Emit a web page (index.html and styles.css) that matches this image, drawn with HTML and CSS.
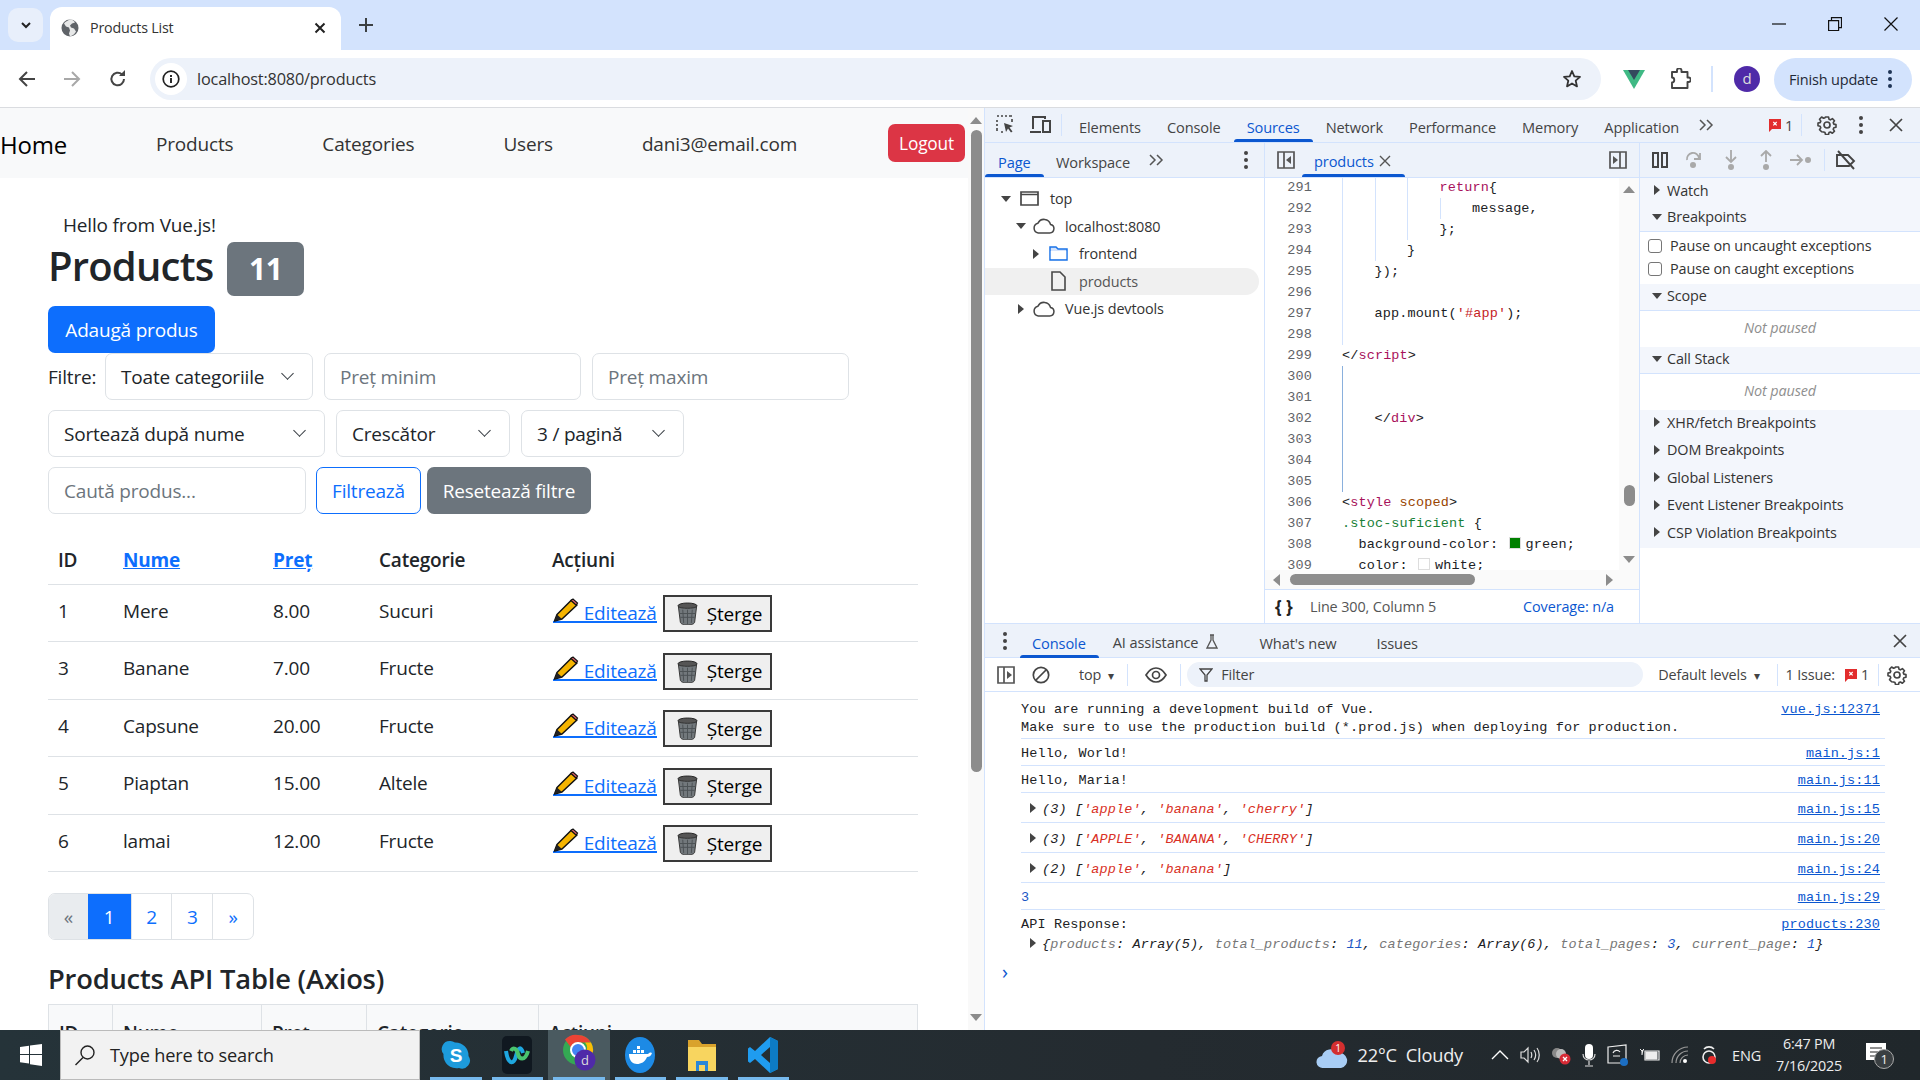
FILE: index.html
```html
<!DOCTYPE html>
<html lang="ro">
<head>
    <meta charset="UTF-8">
    <title>Products List</title>
    <link rel="stylesheet" href="styles.css">
</head>
<body>
<svg class="sprite" width="0" height="0">
    <symbol id="pencil" viewBox="0 0 26 24">
        <path d="M1.500 23l2.500-6.500L18.500 2l5.500 5L9 21z" fill="#f5b400" stroke="#111" stroke-width="1.500" stroke-linejoin="round"/>
        <path d="M18 2.500L20 1l4.500 4-1.500 2z" fill="#e0606a" stroke="#111" stroke-width="1.200"/>
        <path d="M1.500 23L4 16.500 9 21z" fill="#222"/>
    </symbol>
    <symbol id="trash" viewBox="0 0 22 24">
        <ellipse cx="11" cy="4" rx="10" ry="3" fill="#555" stroke="#222"/>
        <path d="M1.500 5l2 16c.3 2 3.500 3 7.500 3s7.200-1 7.500-3l2-16c-2 2-17 2-19 0z" fill="#72787c" stroke="#333"/>
        <path d="M6 8l1 14M11 8v15M16 8l-1 14M3 12h16M3.500 16h15" stroke="#4c5154" fill="none"/>
    </symbol>
    <symbol id="flag" viewBox="0 0 14 14">
        <path d="M1 1h12v10H4l-3 3z" fill="#e22d2d"/>
        <path d="M5.300 4l3.400 3.400M8.700 4L5.300 7.400" stroke="#fff" stroke-width="1.200"/>
    </symbol>
    <symbol id="cloud" viewBox=".5 1 23 16.500">
        <path d="M6 16.500h12a4.500 4.500 0 0 0 .8-8.900A7 7 0 0 0 5.700 6.300 5.200 5.200 0 0 0 6 16.500z" fill="none" stroke="#474747" stroke-width="1.600"/>
    </symbol>
    <symbol id="gear" viewBox="0 0 20 20">
        <path d="M8.300 1.500h3.400l.5 2.500 1.600.7 2.200-1.400 2.300 2.400-1.400 2.100.7 1.700 2.400.5v3l-2.400.5-.7 1.700 1.400 2.100-2.300 2.300-2.200-1.400-1.600.7-.5 2.100H8.300l-.5-2.100-1.600-.7L4 17.900l-2.300-2.300L3.100 13.500l-.7-1.700L0 11.300v-3l2.400-.5.7-1.700L1.700 4l2.300-2.400 2.200 1.400 1.600-.7z" transform="translate(1 .6) scale(.9)" fill="none" stroke="#444" stroke-width="1.800" stroke-linejoin="round"/>
        <circle cx="10" cy="10" r="3" fill="none" stroke="#444" stroke-width="1.700"/>
    </symbol>
    <symbol id="chevrons" viewBox="0 0 15 12">
        <path d="M1 1l5 5-5 5M8 1l5 5-5 5" fill="none" stroke="#555" stroke-width="1.500"/>
    </symbol>
</svg>

<div class="tabstrip">
    <div class="tab-search"><svg width="14" height="14" viewBox="0 0 14 14"><path d="M3 5l4 4 4-4" fill="none" stroke="#222" stroke-width="2"/></svg></div>
    <div class="tab">
        <svg width="18" height="18" viewBox="0 0 18 18"><circle cx="9" cy="9" r="8.500" fill="#5f6368"/><path d="M9 .5c-2 1-5 2-6 4l2 3 3 1 1 3-1 3 1 3c3-1 5-3 6-5l-2-3-3-1-1-2 2-2 3-1c-1-2-3-3-5-3z" fill="#fff" opacity=".85"/></svg>
        <span class="tab-title">Products List</span>
        <svg class="tab-x" width="14" height="14" viewBox="0 0 14 14"><path d="M2.500 2.500l9 9M11.500 2.500l-9 9" stroke="#222" stroke-width="2"/></svg>
    </div>
    <svg class="tab-new" width="16" height="16" viewBox="0 0 16 16"><path d="M8 1v14M1 8h14" stroke="#3c4043" stroke-width="2"/></svg>
    <div class="win-btns">
        <svg width="14" height="14" viewBox="0 0 14 14"><path d="M0 7h14" stroke="#111" stroke-width="1.200"/></svg>
        <svg width="14" height="14" viewBox="0 0 14 14"><path d="M.6 3.600h10v10H.6zM3.500 3.500V.6h10v10h-3" fill="none" stroke="#111" stroke-width="1.200"/></svg>
        <svg width="14" height="14" viewBox="0 0 14 14"><path d="M.5.500l13 13M13.500.5l-13 13" stroke="#111" stroke-width="1.200"/></svg>
    </div>
</div>

<div class="toolbar">
    <svg class="tb-back" width="18" height="18" viewBox="0 0 18 18"><path d="M17 9H2M9 2L2 9l7 7" fill="none" stroke="#444" stroke-width="2"/></svg>
    <svg class="tb-fwd" width="18" height="18" viewBox="0 0 18 18"><path d="M1 9h15M9 2l7 7-7 7" fill="none" stroke="#a8a8a8" stroke-width="2"/></svg>
    <svg class="tb-reload" width="18" height="18" viewBox="0 0 18 18"><path d="M15 9a6.300 6.300 0 1 1-2-4.600" fill="none" stroke="#444" stroke-width="2"/><path d="M10 6h6V0z" fill="#444"/></svg>
    <div class="omnibox">
        <div class="site-info"><svg width="18" height="18" viewBox="0 0 18 18"><circle cx="9" cy="9" r="7.800" fill="none" stroke="#222" stroke-width="1.700"/><path d="M9 8v5M9 5v2" stroke="#222" stroke-width="1.900"/></svg></div>
        <span class="url">localhost:8080/products</span>
        <svg class="star" width="20" height="20" viewBox="0 0 20 20"><path d="M10 2l2.300 5.400 5.700.5-4.300 3.800 1.300 5.700L10 14.400l-5 3 1.300-5.700L2 7.900l5.700-.5z" fill="none" stroke="#333" stroke-width="1.800" stroke-linejoin="round"/></svg>
    </div>
    <svg class="tb-vue" width="22" height="20" viewBox="0 0 22 20"><path d="M0 1h22L11 20z" fill="#3fb984"/><path d="M5 1h12l-6 10z" fill="#34495e"/></svg>
    <svg class="tb-ext" width="22" height="22" viewBox="0 0 22 22"><path d="M3 4h5V2.500a2.200 2.200 0 0 1 4.500 0V4h6v5.500h1a2.200 2.200 0 0 1 0 4.500h-1v6H3v-5.500c3 0 3-5 0-5z" fill="none" stroke="#444" stroke-width="1.900" stroke-linejoin="round"/></svg>
    <span class="tb-sep"></span>
    <span class="avatar">d</span>
    <div class="finish">Finish update<span class="kebab dark"><i></i><i></i><i></i></span></div>
</div>

<div class="main">
    <div class="page">
        <nav class="navbar">
            <a class="brand">Home</a>
            <a>Products</a>
            <a>Categories</a>
            <a>Users</a>
            <a>dani3@email.com</a>
            <button class="btn btn-danger logout">Logout</button>
        </nav>
        <div class="content">
            <p class="hello">Hello from Vue.js!</p>
            <div class="title-row"><h1>Products</h1><span class="badge">11</span></div>
            <button class="btn btn-primary">Adaugă produs</button>
            <div class="filter-row first">
                <label class="lbl-filtre">Filtre:</label>
                <div class="field sel w-cat">Toate categoriile</div>
                <div class="field ph w-pmin">Preț minim</div>
                <div class="field ph w-pmax">Preț maxim</div>
            </div>
            <div class="filter-row">
                <div class="field sel w-sort">Sortează după nume</div>
                <div class="field sel w-ord">Crescător</div>
                <div class="field sel w-per">3 / pagină</div>
            </div>
            <div class="filter-row">
                <div class="field ph w-search">Caută produs...</div>
                <button class="btn btn-outline">Filtrează</button>
                <button class="btn btn-secondary">Resetează filtre</button>
            </div>
            <table class="tbl">
                <colgroup><col class="c1"><col class="c2"><col class="c3"><col class="c4"><col></colgroup>
                <tr><th>ID</th><th><a>Nume</a></th><th><a>Preț</a></th><th>Categorie</th><th>Acțiuni</th></tr>
                <tr><td>1</td><td>Mere</td><td>8.00</td><td>Sucuri</td><td class="actions"><a class="edit"><svg width="26" height="24"><use href="#pencil"/></svg> Editează</a><button class="del"><svg width="21" height="23"><use href="#trash"/></svg> Șterge</button></td></tr>
                <tr><td>3</td><td>Banane</td><td>7.00</td><td>Fructe</td><td class="actions"><a class="edit"><svg width="26" height="24"><use href="#pencil"/></svg> Editează</a><button class="del"><svg width="21" height="23"><use href="#trash"/></svg> Șterge</button></td></tr>
                <tr><td>4</td><td>Capsune</td><td>20.00</td><td>Fructe</td><td class="actions"><a class="edit"><svg width="26" height="24"><use href="#pencil"/></svg> Editează</a><button class="del"><svg width="21" height="23"><use href="#trash"/></svg> Șterge</button></td></tr>
                <tr><td>5</td><td>Piaptan</td><td>15.00</td><td>Altele</td><td class="actions"><a class="edit"><svg width="26" height="24"><use href="#pencil"/></svg> Editează</a><button class="del"><svg width="21" height="23"><use href="#trash"/></svg> Șterge</button></td></tr>
                <tr><td>6</td><td>lamai</td><td>12.00</td><td>Fructe</td><td class="actions"><a class="edit"><svg width="26" height="24"><use href="#pencil"/></svg> Editează</a><button class="del"><svg width="21" height="23"><use href="#trash"/></svg> Șterge</button></td></tr>
            </table>
            <div class="pagination">
                <span class="pg pg-prev">«</span><span class="pg pg-on">1</span><span class="pg">2</span><span class="pg">3</span><span class="pg pg-next">»</span>
            </div>
            <h3>Products API Table (Axios)</h3>
            <table class="tbl2">
                <tr><th class="a">ID</th><th class="b">Nume</th><th class="c">Preț</th><th class="d">Categorie</th><th>Acțiuni</th></tr>
            </table>
        </div>
    </div>
    <div class="page-scroll">
        <span class="arrow up"></span>
        <span class="thumb"></span>
        <span class="arrow down"></span>
    </div>

    <div class="devtools">
        <div class="dt-tabs">
            <svg class="dt-inspect" width="20" height="20" viewBox="0 0 20 20"><path d="M1 1h2M5 1h2M9 1h2M13 1h3M1 5v2M1 9v2M1 13v3M5 17h2M16 4v3" stroke="#444" stroke-width="1.600" fill="none"/><path d="M8 8l9 3-3.500 1.500 3 4-1.500 1-3-4L10 17z" fill="#444"/></svg>
            <svg class="dt-device" width="21" height="20" viewBox="0 0 21 20"><path d="M3 14V2h12v2M0 17h11" fill="none" stroke="#444" stroke-width="2"/><path d="M13 6h7v11h-7z" fill="none" stroke="#444" stroke-width="2"/></svg>
            <span class="dt-sep"></span>
            <span class="dt-tab t-elements">Elements</span>
            <span class="dt-tab">Console</span>
            <span class="dt-tab on">Sources</span>
            <span class="dt-tab">Network</span>
            <span class="dt-tab">Performance</span>
            <span class="dt-tab">Memory</span>
            <span class="dt-tab">Application</span>
            <svg class="more" width="15" height="12"><use href="#chevrons"/></svg>
            <svg class="dt-flag" width="14" height="14"><use href="#flag"/></svg><span class="dt-count">1</span>
            <span class="dt-sep s2"></span>
            <svg class="dt-gear" width="20" height="20"><use href="#gear"/></svg>
            <span class="kebab"><i></i><i></i><i></i></span>
            <svg class="dt-close" width="14" height="14" viewBox="0 0 14 14"><path d="M1 1l12 12M13 1L1 13" stroke="#444" stroke-width="1.700"/></svg>
        </div>
        <div class="dt-top">
            <div class="tree-pane">
                <div class="subbar">
                    <span class="sub-tab on t-page">Page</span>
                    <span class="sub-tab t-work">Workspace</span>
                    <svg class="more small" width="15" height="12"><use href="#chevrons"/></svg>
                    <span class="kebab k-tree"><i></i><i></i><i></i></span>
                </div>
                <div class="tree">
                    <div class="node n0"><span class="tri d"></span><svg width="19" height="15" viewBox="0 0 19 15"><path d="M1 1h17v13H1zM1 3.500h17" fill="none" stroke="#474747" stroke-width="1.700"/></svg>top</div>
                    <div class="node n1"><span class="tri d"></span><svg width="22" height="16"><use href="#cloud"/></svg>localhost:8080</div>
                    <div class="node n2"><span class="tri r"></span><svg width="19" height="15" viewBox="0 0 19 15"><path d="M1 14V1h6l2 2h9v11z" fill="#d3e3fd" stroke="#1a73e8" stroke-width="1.500"/><path d="M1.800 5h15.400v8H1.800z" fill="#fff"/></svg>frontend</div>
                    <div class="node n2 sel-row"><span class="tri none"></span><svg width="15" height="20" viewBox="0 0 15 20"><path d="M1 1h8l5 5v13H1z" fill="none" stroke="#474747" stroke-width="1.600"/></svg>products</div>
                    <div class="node n1"><span class="tri r"></span><svg width="22" height="16"><use href="#cloud"/></svg>Vue.js devtools</div>
                </div>
            </div>
            <div class="code-pane">
                <div class="subbar">
                    <svg class="ico-toggle" width="18" height="18" viewBox="0 0 18 18"><path d="M1 1h16v16H1zM7 1v16" fill="none" stroke="#555" stroke-width="1.700"/><path d="M14 5v8l-5-4z" fill="#555"/></svg>
                    <span class="sub-tab on t-file">products<svg width="12" height="12" viewBox="0 0 12 12"><path d="M1 1l10 10M11 1L1 11" stroke="#555" stroke-width="1.400"/></svg></span>
                    <svg class="ico-toggle r" width="18" height="18" viewBox="0 0 18 18"><path d="M1 1h16v16H1zM11 1v16" fill="none" stroke="#555" stroke-width="1.700"/><path d="M4 5v8l5-4z" fill="#555"/></svg>
                </div>
                <div class="code-view">
                    <div class="code">
<div class="ln"><b>291</b><i></i><i></i><i></i><span class="kw">return</span>{</div>
<div class="ln"><b>292</b><i></i><i></i><i></i><i></i>message,</div>
<div class="ln"><b>293</b><i></i><i></i><i></i>};</div>
<div class="ln"><b>294</b><i></i><i></i>}</div>
<div class="ln"><b>295</b><i></i>});</div>
<div class="ln"><b>296</b><i></i></div>
<div class="ln"><b>297</b><i></i>app.mount(<span class="str">'#app'</span>);</div>
<div class="ln"><b>298</b><i></i></div>
<div class="ln"><b>299</b>&lt;/<span class="kw">script</span>&gt;</div>
<div class="ln"><b>300</b><i class="act"></i></div>
<div class="ln"><b>301</b><i class="act"></i></div>
<div class="ln"><b>302</b><i class="act"></i>&lt;/<span class="kw">div</span>&gt;</div>
<div class="ln"><b>303</b><i class="act"></i></div>
<div class="ln"><b>304</b><i class="act"></i></div>
<div class="ln"><b>305</b><i class="act"></i></div>
<div class="ln"><b>306</b>&lt;<span class="kw">style</span> <span class="attr">scoped</span>&gt;</div>
<div class="ln"><b>307</b><span class="cls">.stoc-suficient</span> {</div>
<div class="ln"><b>308</b>  background-color: <span class="swatch green"></span>green;</div>
<div class="ln"><b>309</b>  color: <span class="swatch white"></span>white;</div>
                    </div>
                    <div class="code-vscroll"><span class="arrow up"></span><span class="vthumb"></span><span class="arrow down"></span></div>
                </div>
                <div class="code-hscroll"><span class="arrow left"></span><span class="hthumb"></span><span class="arrow right"></span></div>
                <div class="status"><span class="braces">{ }</span><span>Line 300, Column 5</span><a>Coverage: n/a</a></div>
            </div>
            <div class="side-pane">
                <div class="subbar dbg">
                    <svg class="d-pause" width="16" height="16" viewBox="0 0 16 16"><path d="M1 1h5v14H1zM10 1h5v14h-5z" fill="none" stroke="#444" stroke-width="2"/></svg>
                    <svg class="d-ico" width="17" height="20" viewBox="0 0 17 20"><path d="M2 10a6 6 0 0 1 12-2M15 3v6h-6" fill="none" stroke="#a9a9a9" stroke-width="1.800"/><circle cx="8" cy="15" r="3" fill="#a9a9a9"/></svg>
                    <svg class="d-ico" width="12" height="20" viewBox="0 0 12 20"><path d="M6 0v11M1 7l5 5 5-5" fill="none" stroke="#a9a9a9" stroke-width="1.800"/><circle cx="6" cy="17" r="3" fill="#a9a9a9"/></svg>
                    <svg class="d-ico" width="12" height="20" viewBox="0 0 12 20"><path d="M6 12V1M1 6l5-5 5 5" fill="none" stroke="#a9a9a9" stroke-width="1.800"/><circle cx="6" cy="17" r="3" fill="#a9a9a9"/></svg>
                    <svg class="d-ico" width="21" height="12" viewBox="0 0 21 12"><path d="M0 6h11M7 1l5 5-5 5" fill="none" stroke="#a9a9a9" stroke-width="1.800"/><circle cx="18" cy="6" r="3" fill="#a9a9a9"/></svg>
                    <span class="dt-sep s3"></span>
                    <svg class="d-off" width="20" height="20" viewBox="0 0 20 20"><path d="M1 5h11l6 6-5 5H1zM2 1l16 18" fill="none" stroke="#444" stroke-width="1.900"/></svg>
                </div>
                <div class="sec b"><span class="tri r"></span>Watch</div>
                <div class="sec b line"><span class="tri d"></span>Breakpoints</div>
                <div class="checks">
                    <label><span class="box"></span>Pause on uncaught exceptions</label>
                    <label><span class="box"></span>Pause on caught exceptions</label>
                </div>
                <div class="sec b line"><span class="tri d"></span>Scope</div>
                <div class="paused">Not paused</div>
                <div class="sec b line"><span class="tri d"></span>Call Stack</div>
                <div class="paused">Not paused</div>
                <div class="sec"><span class="tri r"></span>XHR/fetch Breakpoints</div>
                <div class="sec"><span class="tri r"></span>DOM Breakpoints</div>
                <div class="sec"><span class="tri r"></span>Global Listeners</div>
                <div class="sec"><span class="tri r"></span>Event Listener Breakpoints</div>
                <div class="sec"><span class="tri r"></span>CSP Violation Breakpoints</div>
            </div>
        </div>
        <div class="drawer-tabs">
            <span class="kebab k-drawer"><i></i><i></i><i></i></span>
            <span class="sub-tab on t-console">Console</span>
            <span class="sub-tab t-ai">AI assistance<svg width="12" height="15" viewBox="0 0 12 15"><path d="M4 1h4M5 1v5L1 14h10L7 6V1" fill="none" stroke="#555" stroke-width="1.300"/></svg></span>
            <span class="sub-tab t-new">What's new</span>
            <span class="sub-tab t-issues">Issues</span>
            <svg class="dt-close" width="14" height="14" viewBox="0 0 14 14"><path d="M1 1l12 12M13 1L1 13" stroke="#444" stroke-width="1.700"/></svg>
        </div>
        <div class="console-bar">
            <svg width="18" height="18" viewBox="0 0 18 18"><path d="M1 1h16v16H1zM7 1v16" fill="none" stroke="#555" stroke-width="1.700"/><path d="M10 5v8l5-4z" fill="#555"/></svg>
            <svg class="c-block" width="18" height="18" viewBox="0 0 18 18"><circle cx="9" cy="9" r="7.700" fill="none" stroke="#444" stroke-width="1.700"/><path d="M4 14L14 4" stroke="#444" stroke-width="1.700"/></svg>
            <span class="c-top">top<em>▾</em></span>
            <span class="dt-sep c1"></span>
            <svg class="c-eye" width="22" height="16" viewBox="0 0 22 16"><path d="M1 8c3-5 6-7 10-7s7 2 10 7c-3 5-6 7-10 7S4 13 1 8z" fill="none" stroke="#444" stroke-width="1.700"/><circle cx="11" cy="8" r="3.500" fill="none" stroke="#444" stroke-width="1.700"/></svg>
            <span class="dt-sep c2"></span>
            <div class="c-filter"><svg width="14" height="14" viewBox="0 0 14 14"><path d="M1 1h12L8 7v6H6V7z" fill="none" stroke="#444" stroke-width="1.300"/></svg>Filter</div>
            <span class="c-levels">Default levels<em>▾</em></span>
            <span class="dt-sep c3"></span>
            <span class="c-issue">1 Issue:</span>
            <svg width="14" height="14"><use href="#flag"/></svg><span class="c-num">1</span>
            <span class="dt-sep c4"></span>
            <svg class="c-gear" width="20" height="20"><use href="#gear"/></svg>
        </div>
        <div class="console">
            <div class="msg m-two"><div>You are running a development build of Vue.<br>Make sure to use the production build (*.prod.js) when deploying for production.</div><a>vue.js:12371</a></div>
            <div class="msg"><div>Hello, World!</div><a>main.js:1</a></div>
            <div class="msg"><div>Hello, Maria!</div><a>main.js:11</a></div>
            <div class="msg m-arr"><div><span class="tri r"></span><em>(3) [<s>'apple'</s>, <s>'banana'</s>, <s>'cherry'</s>]</em></div><a>main.js:15</a></div>
            <div class="msg m-arr"><div><span class="tri r"></span><em>(3) [<s>'APPLE'</s>, <s>'BANANA'</s>, <s>'CHERRY'</s>]</em></div><a>main.js:20</a></div>
            <div class="msg m-arr"><div><span class="tri r"></span><em>(2) [<s>'apple'</s>, <s>'banana'</s>]</em></div><a>main.js:24</a></div>
            <div class="msg"><div class="num">3</div><a>main.js:29</a></div>
            <div class="msg m-api"><div>API Response:<br><span class="tri r"></span><em>{<u>products</u>: Array(5), <u>total_products</u>: <b>11</b>, <u>categories</u>: Array(6), <u>total_pages</u>: <b>3</b>, <u>current_page</u>: <b>1</b>}</em></div><a>products:230</a></div>
            <div class="prompt">›</div>
        </div>
    </div>
</div>

<div class="taskbar">
    <svg class="win-logo" width="22" height="22" viewBox="0 0 22 22"><path d="M0 3l9-1.200V10H0zM10 1.600L22 0v10H10zM0 11h9v8.500L0 18.300zM10 11h12v11l-12-1.700z" fill="#fff"/></svg>
    <div class="search">
        <svg width="22" height="22" viewBox="0 0 22 22"><circle cx="13.500" cy="8.500" r="6.500" fill="none" stroke="#222" stroke-width="1.400"/><path d="M9 13.500L1.500 21" stroke="#222" stroke-width="1.400"/></svg>
        <span>Type here to search</span>
    </div>
    <div class="apps">
        <div class="app open"><svg width="30" height="30" viewBox="0 0 30 30"><path d="M9 1a8 8 0 0 1 5 1.500A13 13 0 0 1 27.500 16a8 8 0 0 1-9.500 12A13 13 0 0 1 2.500 14 8 8 0 0 1 9 1z" fill="#1d9bdc"/><text x="15" y="22" text-anchor="middle" font-family="Liberation Sans" font-weight="700" font-size="19" fill="#fff">S</text></svg></div>
        <div class="app open"><svg width="30" height="38" viewBox="0 0 30 38"><rect width="30" height="38" rx="5" fill="#101820"/><path d="M4 15c2 14 8 14 10 5s5-10 7-3" fill="none" stroke="#1ea7e0" stroke-width="4"/><path d="M9 15c2-5 6-2 7 3s7 8 10-3" fill="none" stroke="#49c36f" stroke-width="4"/></svg></div>
        <div class="app open active"><svg width="34" height="42" viewBox="0 0 34 42"><circle cx="16" cy="16" r="15" fill="#34a853"/><path d="M16 1a15 15 0 0 1 13 7.500H16a7.500 7.500 0 0 0-7 5L3 5.500A15 15 0 0 1 16 1z" fill="#ea4335"/><path d="M29 8.500A15 15 0 0 1 16 31l7-12a7.500 7.500 0 0 0 0-10.500z" fill="#fbbc05"/><circle cx="16" cy="16" r="7" fill="#4285f4" stroke="#fff" stroke-width="2"/><circle cx="23" cy="26" r="10.500" fill="#4f2aa8"/><text x="23" y="31" text-anchor="middle" font-family="Open Sans" font-size="13" fill="#ddd">d</text></svg></div>
        <div class="app open"><svg width="30" height="36" viewBox="0 0 30 36"><ellipse cx="15" cy="18" rx="15" ry="18" fill="#1d8ae5"/><path d="M4 17h19c1-1.500 3-2 4-1-1 3-3 4-5 4-2 5-6 7-10 7s-8-3-8-10z" fill="#fff"/><path d="M8 13h3v3H8zM12 13h3v3h-3zM16 13h3v3h-3zM12 9h3v3h-3z" fill="#fff"/></svg></div>
        <div class="app open"><svg width="30" height="32" viewBox="0 0 30 32"><path d="M1 1h11l3 4h14v27H1z" fill="#d9a22c"/><path d="M1 8h28v24H1z" fill="#f8d55f"/><path d="M9 22h12v10H9z" fill="#2b88d8"/><path d="M12 26h6v6h-6z" fill="#f8d55f"/></svg></div>
        <div class="app open"><svg width="30" height="36" viewBox="0 0 30 36"><path d="M22 0l8 4v28l-8 4L7 22l-5 4-2-1.500V11.500L2 10l5 4zM22 10l-9 8 9 8z" fill="#1f9cf0"/><path d="M22 0l8 4v28l-8 4z" fill="#0d7bc4"/></svg></div>
    </div>
    <div class="tray">
        <svg class="t-cloud" width="32" height="30" viewBox="0 0 32 30"><path d="M7 28a6 6 0 0 1-1-12 9 9 0 0 1 16-3 7.500 7.500 0 0 1 3 15z" fill="#a8cdf5"/><circle cx="22" cy="8" r="7" fill="#d32f2f"/><text x="22" y="12" text-anchor="middle" font-family="Open Sans" font-size="10" fill="#fff">1</text></svg>
        <span class="t-weather">22°C&nbsp; Cloudy</span>
        <svg class="t-up" width="18" height="10" viewBox="0 0 18 10"><path d="M1 9l8-8 8 8" fill="none" stroke="#fff" stroke-width="1.400"/></svg>
        <svg class="t-ico" width="20" height="18" viewBox="0 0 20 18"><path d="M1 6h3l4-4v14l-4-4H1zM11 6c1 2 1 4 0 6M14 4c2 3 2 7 0 10M17 2c3 4 3 10 0 14" fill="none" stroke="#ddd" stroke-width="1.200"/></svg>
        <svg class="t-ico" width="20" height="20" viewBox="0 0 20 20"><circle cx="6" cy="8" r="5" fill="#888"/><circle cx="10" cy="9" r="5" fill="#bbb"/><circle cx="14" cy="14" r="5.500" fill="#d62b36"/><path d="M12 12l4 4M16 12l-4 4" stroke="#fff" stroke-width="1.300"/></svg>
        <svg class="t-ico" width="14" height="24" viewBox="0 0 14 24"><rect x="3" y="1" width="8" height="15" rx="4" fill="#fff"/><path d="M1 11c0 8 12 8 12 0M7 18v4M3 23h8" fill="none" stroke="#ddd" stroke-width="1.200"/></svg>
        <svg class="t-ico" width="22" height="22" viewBox="0 0 22 22"><path d="M1 3l18-2v18H1z" fill="none" stroke="#eee" stroke-width="1.200"/><path d="M6 9a4 4 0 0 1 7-1M6 12h7" fill="none" stroke="#eee" stroke-width="1.200"/><circle cx="17" cy="18" r="4" fill="#1c6fc4"/></svg>
        <svg class="t-ico" width="20" height="14" viewBox="0 0 20 14"><path d="M5 3h14v9H5z" fill="none" stroke="#eee" stroke-width="1.200"/><path d="M6 4h11v7H6zM0 1l2 2M4 1L2 3v4" fill="#eee" stroke="#eee"/></svg>
        <svg class="t-ico" width="18" height="18" viewBox="0 0 18 18"><path d="M1 17a16 16 0 0 1 16-16M5 17A12 12 0 0 1 17 5M9 17a8 8 0 0 1 8-8" fill="none" stroke="#999" stroke-width="1.200"/><circle cx="14" cy="15" r="2" fill="#fff"/></svg>
        <svg class="t-ico" width="18" height="22" viewBox="0 0 18 22"><path d="M4 5a7 7 0 0 1 10 0" fill="none" stroke="#eee" stroke-width="1.600"/><circle cx="9" cy="13" r="6" fill="none" stroke="#eee" stroke-width="1.600"/><circle cx="12" cy="16" r="4" fill="#e82c2c"/></svg>
        <span class="t-lang">ENG</span>
        <div class="t-clock"><span>6:47 PM</span><span>7/16/2025</span></div>
        <div class="t-notif"><svg width="20" height="22" viewBox="0 0 20 22"><path d="M0 0h20v17H0z" fill="#fff"/><path d="M4 5h12M4 9h12M4 13h8" stroke="#222"/></svg><span>1</span></div>
    </div>
</div>
</body>
</html>
```

FILE: styles.css
```css
* {
    box-sizing: border-box;
}
html, body {
    margin: 0;
    padding: 0;
    width: 1920px;
    height: 1080px;
    overflow: hidden;
}
body {
    font-family: "Open Sans", "Noto Sans", sans-serif;
    letter-spacing: -0.012em;
    color: #212529;
    display: flex;
    flex-direction: column;
    background: #fff;
}
.sprite {
    position: absolute;
}
svg {
    flex: none;
}

/* browser chrome */
.tabstrip {
    height: 50px;
    background: #d3e3fd;
    display: flex;
    align-items: flex-end;
    position: relative;
}
.tab-search {
    width: 35px;
    height: 34px;
    margin: 0 7px 8px 8px;
    background: #e8effb;
    border-radius: 10px;
    display: flex;
    align-items: center;
    justify-content: center;
}
.tab {
    width: 291px;
    height: 43px;
    background: #fff;
    border-radius: 12px 12px 0 0;
    display: flex;
    align-items: center;
    padding: 0 14px 2px 11px;
    gap: 11px;
    font-size: 14.300px;
    color: #333;
    margin-top: 7px;
}
.tab-title {
    flex: 1;
}
.tab-new {
    margin: 0 0 17px 17px;
}
.win-btns {
    position: absolute;
    right: 22px;
    top: 17px;
    display: flex;
    gap: 42px;
}
.toolbar {
    height: 58px;
    background: #fff;
    border-radius: 10px 10px 0 0;
    border-bottom: 1px solid #dadce0;
    display: flex;
    align-items: center;
    padding: 1px 8px 0 18px;
    position: relative;
}
.tb-fwd {
    margin-left: 27px;
}
.tb-reload {
    margin-left: 28px;
}
.omnibox {
    width: 1452px;
    height: 42px;
    margin-left: 23px;
    background: #edf2fa;
    border-radius: 21px;
    display: flex;
    align-items: center;
    padding: 0 19px 0 5px;
}
.site-info {
    width: 32px;
    height: 32px;
    border-radius: 50%;
    background: #fff;
    display: flex;
    align-items: center;
    justify-content: center;
    margin-right: 10px;
}
.url {
    flex: 1;
    font-size: 16.300px;
    color: #333;
}
.tb-vue {
    margin-left: 22px;
}
.tb-ext {
    margin-left: 24px;
}
.tb-sep {
    width: 2px;
    height: 26px;
    background: #d3e3fd;
    margin-left: 20px;
}
.avatar {
    width: 26px;
    height: 26px;
    border-radius: 50%;
    background: #4f2aa8;
    color: #ddd;
    font-size: 15px;
    text-align: center;
    line-height: 25px;
    margin-left: 21px;
}
.finish {
    width: 138px;
    height: 43px;
    margin-left: 14px;
    background: #d3e3fd;
    border-radius: 22px;
    display: flex;
    align-items: center;
    padding-left: 15px;
    font-size: 14.500px;
    color: #1f2937;
    gap: 10px;
}
.kebab {
    display: inline-flex;
    flex-direction: column;
    gap: 3px;
    width: 4px;
}
.kebab i {
    width: 4px;
    height: 4px;
    border-radius: 50%;
    background: #444;
}
.kebab.dark i {
    background: #1f3556;
}

.main {
    flex: 1;
    height: 922px;
    display: flex;
    min-height: 0;
}

/* page */
.page {
    width: 968px;
    overflow: hidden;
    font-size: 19px;
}
.navbar {
    height: 70px;
    background: #f8f9fa;
    display: flex;
    align-items: center;
    gap: 89px;
    padding: 2px 3px 0 0;
    color: #333;
}
.navbar a {
    white-space: nowrap;
}
.brand {
    font-size: 24px;
    color: #000;
}
.btn {
    border: 1px solid transparent;
    border-radius: 7px;
    font: inherit;
    letter-spacing: inherit;
    height: 47px;
    padding: 0 15px;
    display: block;
    white-space: nowrap;
}
.btn-danger {
    background: #dc3545;
    color: #fff;
    font-size: 17.300px;
    height: 38px;
}
.logout {
    margin-left: auto;
    width: 77px;
    padding: 0;
    margin-top: -2px;
}
.btn-primary {
    background: #0d6efd;
    color: #fff;
    width: 167px;
    padding: 0;
}
.btn-outline {
    background: #fff;
    border-color: #0d6efd;
    color: #0d6efd;
    width: 105px;
    padding: 0;
    margin-left: 10px;
}
.btn-secondary {
    background: #6c757d;
    color: #fff;
    width: 164px;
    padding: 0;
    margin-left: 6px;
}
.content {
    padding: 32px 0 0 48px;
    width: 918px;
}
.hello {
    margin: 0;
    padding-left: 15px;
    line-height: 30px;
}
.title-row {
    display: flex;
    align-items: center;
    height: 54px;
    gap: 14px;
    margin: 2px 0 10px;
}
h1 {
    margin: 0 0 6px;
    font-size: 40px;
    font-weight: 600;
    letter-spacing: -0.02em;
    line-height: 48px;
}
.badge {
    width: 77px;
    height: 54px;
    border-radius: 7px;
    background: #6c757d;
    color: #fff;
    font-size: 30px;
    font-weight: 700;
    text-align: center;
    line-height: 54px;
}
.filter-row {
    display: flex;
    align-items: center;
    margin-top: 10px;
}
.filter-row.first {
    margin-top: 0;
}
.lbl-filtre {
    width: 57px;
}
.field {
    height: 47px;
    border: 1px solid #dee2e6;
    border-radius: 7px;
    display: flex;
    align-items: center;
    padding: 0 15px;
    background: #fff;
    margin-right: 11px;
}
.ph {
    color: #6c757d;
}
.sel {
    position: relative;
}
.sel::after {
    content: "";
    position: absolute;
    right: 20px;
    top: 15px;
    width: 8px;
    height: 8px;
    border-right: 1.800px solid #343a40;
    border-bottom: 1.800px solid #343a40;
    transform: rotate(45deg);
}
.w-cat { width: 208px; }
.w-pmin { width: 257px; }
.w-pmax { width: 257px; }
.w-sort { width: 277px; }
.w-ord { width: 174px; }
.w-per { width: 163px; }
.w-search { width: 258px; margin-right: 0; }

.tbl {
    width: 870px;
    border-collapse: collapse;
    table-layout: fixed;
    margin-top: 20px;
}
.c1 { width: 65px; }
.c2 { width: 150px; }
.c3 { width: 106px; }
.c4 { width: 173px; }
.tbl th {
    text-align: left;
    font-weight: 600;
    height: 50px;
    padding: 2px 10px 0;
    color: #212529;
    border-bottom: 1px solid #dee2e6;
}
.tbl th a {
    color: #0d6efd;
    text-decoration: underline;
    font-weight: 700;
}
.tbl td {
    height: 57.500px;
    padding: 0 10px 4px;
    border-bottom: 1px solid #dee2e6;
    color: #212529;
}
.actions {
    white-space: nowrap;
}
.edit {
    display: inline-block;
    color: #0d6efd;
    border-bottom: 2px solid #0d6efd;
    line-height: 23px;
    height: 25px;
    vertical-align: middle;
    margin-left: 1px;
    position: relative;
    top: 0;
}
.edit svg {
    vertical-align: -2px;
    margin-right: 0;
}
.del {
    display: inline-flex;
    align-items: center;
    gap: 9px;
    vertical-align: middle;
    width: 109px;
    height: 37px;
    margin-left: 6px;
    padding: 0 0 0 12px;
    background: #efefef;
    border: 2.500px solid #3a3a3a;
    font: inherit;
    letter-spacing: inherit;
    color: #000;
    position: relative;
    top: 3px;
}
.pagination {
    display: flex;
    width: 206px;
    height: 47px;
    margin-top: 21px;
    border: 1px solid #dee2e6;
    border-radius: 7px;
    overflow: hidden;
}
.pg {
    flex: 1 1 41px;
    border-left: 1px solid #dee2e6;
    color: #0d6efd;
    display: flex;
    align-items: center;
    justify-content: center;
}
.pg-prev {
    flex-basis: 39px;
    border-left: 0;
    background: #e9ecef;
    color: #6c757d;
}
.pg-on {
    flex-basis: 43px;
    background: #0d6efd;
    color: #fff;
    border-left: 0;
}
h3 {
    margin: 18px 0 0;
    font-size: 27.300px;
    font-weight: 600;
    line-height: 41px;
}
.tbl2 {
    width: 870px;
    margin-top: 5px;
    border-collapse: collapse;
    background: #f8f9fa;
}
.tbl2 th {
    text-align: left;
    border: 1px solid #dee2e6;
    padding: 13px 10px;
    font-weight: 600;
    line-height: 30px;
}
.tbl2 .a { width: 64px; }
.tbl2 .b { width: 149px; }
.tbl2 .c { width: 105px; }
.tbl2 .d { width: 172px; }

/* scrollbar of the page */
.page-scroll {
    width: 16px;
    background: #f9f9f9;
    display: flex;
    flex-direction: column;
    align-items: center;
    padding-top: 9px;
}
.thumb {
    width: 11px;
    height: 642px;
    margin-top: 6px;
    border-radius: 6px;
    background: #8c8c8c;
}
.page-scroll .down {
    margin-top: auto;
    margin-bottom: 9px;
}
.arrow {
    width: 0;
    height: 0;
    border: 6px solid transparent;
    display: block;
}
.arrow.up {
    border-top: 0;
    border-bottom: 7px solid #8c8c8c;
}
.arrow.down {
    border-bottom: 0;
    border-top: 7px solid #8c8c8c;
}
.arrow.left {
    border-left: 0;
    border-right: 7px solid #8c8c8c;
}
.arrow.right {
    border-right: 0;
    border-left: 7px solid #8c8c8c;
}

/* devtools */
.devtools {
    flex: 1;
    min-width: 0;
    border-left: 1px solid #d3e3fd;
    font-size: 14.400px;
    color: #444;
    display: flex;
    flex-direction: column;
    background: #fff;
    letter-spacing: -0.008em;
}
.dt-tabs {
    height: 35px;
    background: #edf2fa;
    border-bottom: 1px solid #d3e3fd;
    display: flex;
    align-items: center;
    padding: 0 17px 0 11px;
    position: relative;
}
.dt-device {
    margin-left: 14px;
}
.dt-sep {
    width: 1px;
    height: 22px;
    background: #d3e3fd;
    margin-left: 10px;
}
.dt-tab {
    height: 34px;
    line-height: 34px;
    padding: 2px 13px 0;
    position: relative;
    font-size: 14.600px;
}
.t-elements {
    margin-left: 4px;
}
.dt-tab.on, .sub-tab.on {
    color: #0b57d0;
}
.dt-tab.on::after, .sub-tab.on::after {
    content: "";
    position: absolute;
    left: 0;
    right: 0;
    bottom: 0;
    height: 3px;
    background: #0b57d0;
    border-radius: 3px 3px 0 0;
}
.more {
    margin: -1px 0 0 7px;
}
.dt-flag {
    margin-left: auto;
}
.dt-count {
    margin-left: 3px;
}
.s2 {
    margin-left: 8px;
}
.dt-gear {
    margin-left: 15px;
}
.dt-tabs .kebab {
    margin-left: 22px;
}
.dt-tabs .dt-close {
    margin-left: 26px;
}
.dt-top {
    height: 481px;
    display: flex;
    border-bottom: 1px solid #d3e3fd;
}
.subbar {
    height: 35px;
    background: #edf2fa;
    border-bottom: 1px solid #d3e3fd;
    display: flex;
    align-items: center;
    position: relative;
    flex: none;
}
.sub-tab {
    position: relative;
    height: 34px;
    line-height: 34px;
    padding-top: 2px;
    font-size: 14.600px;
}
.tree-pane {
    width: 280px;
    border-right: 1px solid #d3e3fd;
}
.t-page {
    width: 59px;
    padding-left: 13px;
}
.t-work {
    margin-left: 12px;
}
.more.small {
    margin-left: 19px;
}
.k-tree {
    margin-left: auto;
    margin-right: 16px;
}
.tree {
    padding-top: 7px;
}
.node {
    height: 27.500px;
    display: flex;
    align-items: center;
    color: #333;
}
.node svg {
    margin-right: 11px;
}
.n0 { padding-left: 16px; }
.n0 svg { margin-left: 9px; }
.n1 { padding-left: 31px; }
.n1 svg { margin-left: 7px; margin-right: 10px; }
.n2 { padding-left: 46px; }
.n2 svg { margin-left: 8px; }
.sel-row {
    background: #f0f0f0;
    border-radius: 0 14px 14px 0;
    margin-right: 5px;
    color: #555;
}
.sel-row svg {
    margin-left: 10px;
    margin-right: 13px;
}
.tri {
    display: inline-block;
    width: 0;
    height: 0;
    flex: none;
}
.tri.d {
    border-left: 5px solid transparent;
    border-right: 5px solid transparent;
    border-top: 6px solid #444;
}
.tri.r {
    border-top: 5px solid transparent;
    border-bottom: 5px solid transparent;
    border-left: 6px solid #444;
    margin-left: 2px;
    margin-right: 2px;
}
.tri.none {
    width: 10px;
}
.code-pane {
    width: 375px;
    display: flex;
    flex-direction: column;
    border-right: 1px solid #d3e3fd;
}
.ico-toggle {
    margin-left: 12px;
}
.ico-toggle.r {
    margin-left: auto;
    margin-right: 12px;
}
.t-file {
    margin-left: 7px;
    padding: 2px 14px 0 12px;
    display: flex;
    align-items: center;
    gap: 5px;
}
.code-view {
    flex: 1;
    display: flex;
    min-height: 0;
}
.code {
    flex: 1;
    overflow: hidden;
    font-family: "Liberation Mono", monospace;
    font-size: 13.500px;
    letter-spacing: 0.125px;
    color: #202124;
    margin-top: -1px;
}
.ln {
    height: 21px;
    line-height: 21px;
    white-space: pre;
}
.ln b {
    display: inline-block;
    font-weight: 400;
    color: #5f6368;
    width: 47px;
    text-align: right;
    margin-right: 30px;
}
.ln i {
    display: inline-block;
    vertical-align: top;
    width: 32.500px;
    height: 21px;
    border-left: 1px solid #d3e3fd;
}
.ln i.act {
    border-left-color: #8ab0dd;
}
.kw { color: #a8125c; }
.str { color: #c5221f; }
.attr { color: #994500; }
.cls { color: #188038; }
.swatch {
    display: inline-block;
    width: 12px;
    height: 12px;
    margin: 0 5px 0 2px;
    border: 1px solid #ddd;
    vertical-align: -1px;
}
.swatch.green { background: #008000; }
.swatch.white { background: #fff; }
.code-vscroll {
    width: 20px;
    background: #fafafa;
    display: flex;
    flex-direction: column;
    align-items: center;
    padding-top: 8px;
}
.vthumb {
    width: 11px;
    height: 21px;
    margin-top: 292px;
    border-radius: 6px;
    background: #8c8c8c;
}
.code-vscroll .down {
    margin-top: 50px;
}
.code-hscroll {
    height: 19px;
    background: #fafafa;
    display: flex;
    align-items: center;
    padding-left: 8px;
    flex: none;
}
.hthumb {
    width: 185px;
    height: 11px;
    margin-left: 10px;
    background: #8c8c8c;
    border-radius: 6px;
}
.code-hscroll .right {
    margin-left: 131px;
}
.status {
    height: 34px;
    border-top: 1px solid #d3e3fd;
    display: flex;
    align-items: center;
    padding: 0 25px 0 10px;
    color: #555;
    flex: none;
}
.braces {
    color: #222;
    font-weight: 700;
    font-size: 17px;
    width: 35px;
    white-space: nowrap;
}
.status a {
    margin-left: auto;
    color: #0b57d0;
}
.side-pane {
    flex: 1;
    min-width: 0;
}
.dbg {
    padding-left: 12px;
}
.d-ico {
    margin-left: 17px;
}
.d-ico:nth-of-type(3), .d-ico:nth-of-type(4) {
    margin-left: 23px;
}
.d-ico:nth-of-type(5) {
    margin-left: 18px;
}
.s3 {
    margin-left: 13px;
}
.d-off {
    margin-left: 11px;
}
.sec {
    height: 27.500px;
    background: #f3f6fc;
    display: flex;
    align-items: center;
    padding: 0 0 3px 12px;
    color: #333;
    gap: 5px;
}
.sec.b {
    height: 27px;
}
.sec.line {
    border-bottom: 1px solid #d3e3fd;
}
.checks {
    height: 52px;
    padding: 2px 0 0 8px;
}
.checks label {
    display: flex;
    align-items: center;
    height: 23px;
    gap: 8px;
    color: #333;
}
.box {
    width: 14px;
    height: 14px;
    border: 1px solid #767676;
    border-radius: 3px;
}
.paused {
    height: 36px;
    line-height: 34px;
    text-align: center;
    font-style: italic;
    color: #8f8f8f;
}
.drawer-tabs {
    height: 34px;
    background: #edf2fa;
    border-bottom: 1px solid #d3e3fd;
    display: flex;
    align-items: center;
    position: relative;
    flex: none;
}
.k-drawer {
    margin-left: 18px;
}
.t-console {
    margin-left: 13px;
    padding: 2px 13px 0 12px;
}
.t-ai {
    margin-left: 14px;
    display: flex;
    align-items: center;
    gap: 8px;
}
.t-new {
    margin-left: 41px;
}
.t-issues {
    margin-left: 40px;
}
.drawer-tabs .dt-close {
    margin-left: auto;
    margin-right: 13px;
}
.console-bar {
    height: 34px;
    border-bottom: 1px solid #d3e3fd;
    display: flex;
    align-items: center;
    padding: 0 13px 0 12px;
    flex: none;
}
.c-block {
    margin-left: 17px;
}
.c-top {
    margin-left: 29px;
}
.c-top em, .c-levels em {
    font-style: normal;
    font-size: 12px;
    margin-left: 7px;
}
.dt-sep.c1 { margin-left: 13px; }
.c-eye { margin-left: 17px; }
.dt-sep.c2 { margin-left: 13px; }
.c-filter {
    width: 456px;
    height: 25px;
    margin-left: 6px;
    background: #edf2fa;
    border-radius: 13px;
    display: flex;
    align-items: center;
    padding-left: 12px;
    gap: 8px;
}
.c-levels { margin-left: 15px; }
.dt-sep.c3 { margin-left: auto; }
.c-issue { margin-left: 7px; margin-right: 9px; }
.c-num { margin-left: 3px; }
.dt-sep.c4 { margin-left: 9px; }
.c-gear { margin-left: 8px; }
.console {
    flex: 1;
    min-height: 0;
    padding-left: 36px;
    font-family: "Liberation Mono", monospace;
    font-size: 13.500px;
    letter-spacing: 0.125px;
    color: #202124;
}
.msg {
    display: flex;
    justify-content: space-between;
    border-bottom: 1px solid #d3e3fd;
    margin-right: 35px;
    height: 27px;
    line-height: 19px;
    padding: 5px 0 0;
    white-space: pre;
}
.msg > div {
    flex: 1;
    min-width: 0;
}
.msg a {
    color: #0b57d0;
    text-decoration: underline;
    margin-right: 5px;
}
.m-two {
    height: 47px;
    line-height: 18px;
    padding-top: 9px;
}
.m-arr {
    height: 30px;
    padding-top: 7px;
}
.m-arr .tri, .m-api .tri {
    margin: 0 6px 0 9px;
}
.msg em {
    font-style: italic;
}
.msg s {
    text-decoration: none;
    color: #d93025;
}
.msg .num, .msg b {
    color: #1a56c4;
    font-weight: 400;
}
.msg u {
    text-decoration: none;
    color: #777;
}
.m-api {
    height: 45px;
    border: 0;
    line-height: 20px;
}
.prompt {
    margin: 3px 0 0 -19px;
    color: #0b57d0;
    font-size: 20px;
    font-family: "Open Sans", sans-serif;
}

/* windows taskbar */
.taskbar {
    height: 50px;
    flex: none;
    background: linear-gradient(90deg, #253339, #242b30 60%, #20272b);
    display: flex;
    align-items: center;
    color: #eee;
    position: relative;
}
.win-logo {
    margin-left: 20px;
}
.search {
    width: 360px;
    height: 50px;
    margin-left: 18px;
    background: #f2f2f2;
    border: 1px solid #bbb;
    color: #222;
    display: flex;
    align-items: center;
    padding-left: 13px;
    gap: 14px;
    font-size: 18.200px;
}
.apps {
    display: flex;
    margin-left: 5px;
    height: 50px;
}
.app {
    width: 61.500px;
    height: 50px;
    display: flex;
    align-items: center;
    justify-content: center;
    position: relative;
}
.app.open::after {
    content: "";
    position: absolute;
    left: 5px;
    right: 5px;
    bottom: 0;
    height: 3px;
    background: #76b9ed;
}
.app.active {
    background: #4a5a60;
}
.tray {
    margin-left: auto;
    display: flex;
    align-items: center;
    height: 50px;
    padding-right: 34px;
}
.t-weather {
    font-size: 18.200px;
    margin-left: 9px;
    white-space: nowrap;
    color: #eee;
}
.t-up {
    margin-left: 28px;
}
.t-ico {
    margin-left: 11px;
}
.t-lang {
    font-size: 14.500px;
    margin-left: 14px;
}
.t-clock {
    display: flex;
    flex-direction: column;
    align-items: center;
    font-size: 14.300px;
    line-height: 22px;
    margin-left: 12px;
    width: 72px;
}
.t-notif {
    position: relative;
    margin-left: 21px;
    height: 24px;
}
.t-notif span {
    position: absolute;
    left: 8px;
    top: 6px;
    width: 20px;
    height: 20px;
    border-radius: 50%;
    background: #3a3f42;
    border: 1px solid #aaa;
    font-size: 13px;
    text-align: center;
    line-height: 18px;
}
```
